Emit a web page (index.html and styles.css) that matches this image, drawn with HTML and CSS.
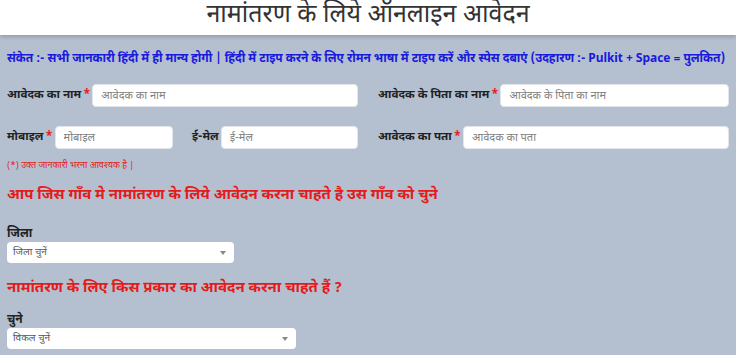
FILE: index.html
```html
<!DOCTYPE html>
<html lang="hi">
<head>
<meta charset="utf-8">
<title>नामांतरण के लिये ऑनलाइन आवेदन</title>
<link rel="stylesheet" href="styles.css">
</head>
<body>
<header class="top">
  <h1 class="title">नामांतरण के लिये ऑनलाइन आवेदन</h1>
</header>
<main class="form">
  <p class="hint">संकेत :- सभी जानकारी हिंदी में ही मान्य होगी | हिंदी में टाइप करने के लिए रोमन भाषा में टाइप करें और स्पेस दबाएं (उदहारण :- Pulkit + Space = पुलकित)</p>

  <div class="row">
    <div class="col">
      <label class="lbl">आवेदक का नाम<span class="req">*</span></label>
      <input class="inp" placeholder="आवेदक का नाम">
    </div>
    <div class="col">
      <label class="lbl">आवेदक के पिता का नाम<span class="req">*</span></label>
      <input class="inp" placeholder="आवेदक के पिता का नाम">
    </div>
  </div>

  <div class="row row2">
    <div class="col">
      <div class="sub sub-mobile">
        <label class="lbl">मोबाइल<span class="req">*</span></label>
        <input class="inp" placeholder="मोबाइल">
      </div>
      <div class="sub sub-mail">
        <label class="lbl">ई-मेल</label>
        <input class="inp" placeholder="ई-मेल">
      </div>
    </div>
    <div class="col">
      <label class="lbl">आवेदक का पता<span class="req">*</span></label>
      <input class="inp" placeholder="आवेदक का पता">
    </div>
  </div>

  <p class="note">(*) उक्त जानकारी भरना आवश्यक है |</p>

  <h2 class="qhead">आप जिस गाँव मे नामांतरण के लिये आवेदन करना चाहते है उस गाँव को चुने</h2>
  <div class="field">
    <label class="flabel">जिला</label>
    <div class="sel sel-district"><span>जिला चुनें</span><i class="caret"></i></div>
  </div>

  <h2 class="qhead qhead2">नामांतरण के लिए किस प्रकार का आवेदन करना चाहते हैं ?</h2>
  <div class="field field2">
    <label class="flabel">चुने</label>
    <div class="sel sel-type"><span>विकल चुनें</span><i class="caret"></i></div>
  </div>
</main>
</body>
</html>
```

FILE: styles.css
```css
* { box-sizing: border-box; }
html, body { margin: 0; padding: 0; }
body {
  background: #b4c0cf;
  font-family: "Noto Sans Devanagari", "Lohit Devanagari", "Noto Sans", "Liberation Sans", sans-serif;
  color: #222;
  overflow: hidden;
}
.top {
  background: #fff;
  height: 35px;
  box-shadow: 0 2px 4px rgba(0,0,0,0.18);
  text-align: center;
}
.title {
  margin: 0;
  font-size: 25px;
  font-weight: 400;
  line-height: 33px;
  color: #333;
}
.form { padding: 0 7px; }
.hint {
  margin: 15px 0 0;
  font-size: 12px;
  font-weight: 700;
  color: #1a1adc;
  white-space: nowrap;
  line-height: 18px;
  letter-spacing: -0.05px;
}
.row {
  display: grid;
  grid-template-columns: 351px 1fr;
  gap: 20px;
  margin-top: 16px;
}
.row2 { margin-top: 19px; }
.col { display: flex; align-items: center; min-width: 0; }
.sub { display: flex; align-items: center; min-width: 0; }
.sub-mobile { width: 166px; flex: none; }
.sub-mail { flex: 1; margin-left: 19px; }
.lbl {
  font-size: 11.7px;
  font-weight: 700;
  color: #222;
  white-space: nowrap;
  margin-right: 2px;
}
.req { color: #e02424; margin-left: 2px; }
.inp {
  flex: 1;
  min-width: 0;
  width: 0;
  height: 23px;
  border: 1px solid #e2e6ea;
  border-radius: 4px;
  background: #fff;
  padding: 0 8px;
  font: inherit;
  font-size: 11px;
  color: #555;
}
.inp::placeholder { color: #808080; }
.note {
  margin: 11px 0 0;
  font-size: 9px;
  color: #e02424;
}
.qhead {
  margin: 13px 0 0;
  font-size: 15px;
  font-weight: 700;
  color: #e41b1b;
  line-height: 22px;
}
.qhead2 { margin-top: 15px; }
.field { margin-top: 20px; }
.field2 { margin-top: 13px; }
.flabel {
  display: block;
  font-size: 12px;
  font-weight: 700;
  color: #222;
  line-height: 14px;
}
.sel {
  display: flex;
  align-items: center;
  justify-content: space-between;
  height: 21px;
  margin-top: 1px;
  background: #fff;
  border-radius: 4px;
  padding: 0 8px 0 6px;
  font-size: 10px;
  color: #555;
}
.sel-district { width: 227px; }
.sel-type { width: 289px; }
.caret {
  width: 0; height: 0;
  border-left: 3px solid transparent;
  border-right: 3px solid transparent;
  border-top: 4px solid #888;
}
```
